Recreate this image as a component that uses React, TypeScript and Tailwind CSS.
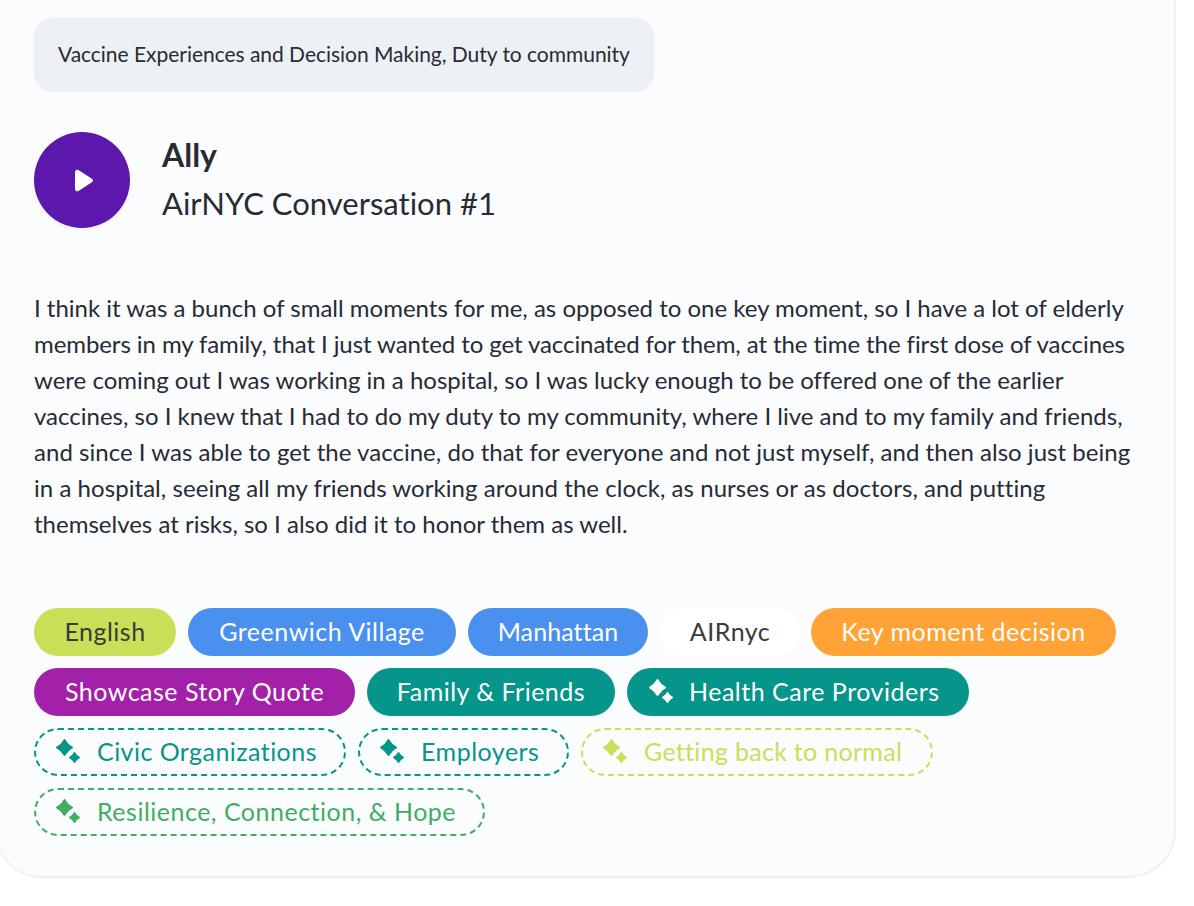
const Sparkle = () => (
  <svg viewBox="0 0 24 24" className="w-[24px] h-[24px] shrink-0" fill="currentColor" stroke="currentColor" strokeWidth="1.6" strokeLinejoin="round">
    <path d="M8.500 .8 Q11.200 5.800 16.200 8.500 Q11.200 11.200 8.500 16.200 Q5.800 11.200 .8 8.500 Q5.800 5.800 8.500 .8 Z" />
    <path d="M18.500 13.800 Q20.100 16.900 23.200 18.500 Q20.100 20.100 18.500 23.200 Q16.900 20.100 13.800 18.500 Q16.900 16.900 18.500 13.800 Z" />
  </svg>
);

const solid = "h-12 rounded-full flex items-center justify-center pb-[2px] text-[25px] leading-none whitespace-nowrap";
const dashed = "h-12 rounded-full flex items-center gap-[17px] pl-[20px] pb-[2px] text-[25px] leading-none whitespace-nowrap border-2 border-dashed";

export default function App() {
  return (
    <div className="w-[1194px] h-[906px] bg-white overflow-hidden [font-variant-ligatures:none]" style={{ fontFamily: '"Lato", "Open Sans", sans-serif' }}>
      <div className="-ml-[6px] w-[1182px] h-[878px] bg-[#fbfcfe] border-x-2 border-b-2 border-[#eef2f6] rounded-b-[48px] pl-[38px] pr-[40px] pt-[18px] text-[#272b33]">
        <div className="w-[620px] h-[74px] rounded-[18px] bg-[#edf1f5] flex items-center pl-[24px] pb-[3px] text-[21px] tracking-[-0.03px] whitespace-nowrap">
          Vaccine Experiences and Decision Making, Duty to community
        </div>
        <div className="flex items-center gap-8 mt-[40px]">
          <div className="w-24 h-24 rounded-full bg-[#5c17ac] flex items-center justify-center shadow-[0_2px_4px_rgba(0,0,0,0.05)]">
            <svg viewBox="0 0 20 23" className="w-5 h-[23px] ml-[4px]" fill="white">
              <path d="M1 3c0-1.800 1.900-2.900 3.400-2l13.500 8.700c1.400.8 1.400 2.800 0 3.600L4.400 22c-1.500.9-3.400-.2-3.400-2z" />
            </svg>
          </div>
          <div className="-mt-[3px]">
            <div className="text-[32px] font-bold leading-[48px]">Ally</div>
            <div className="text-[31px] leading-[48px]">AirNYC Conversation #1</div>
          </div>
        </div>
        <p className="mt-[62px] text-[24px] leading-[36px] w-[1110px] whitespace-nowrap">
          I think it was a bunch of small moments for me, as opposed to one key moment, so I have a lot of elderly<br />
          <span className="tracking-[-0.08px]">members in my family, that I just wanted to get vaccinated for them, at the time the first dose of vaccines</span><br />
          were coming out I was working in a hospital, so I was lucky enough to be offered one of the earlier<br />
          vaccines, so I knew that I had to do my duty to my community, where I live and to my family and friends,<br />
          <span className="tracking-[0.03px]">and since I was able to get the vaccine, do that for everyone and not just myself, and then also just being</span><br />
          <span className="tracking-[0.05px]">in a hospital, seeing all my friends working around the clock, as nurses or as doctors, and putting</span><br />
          themselves at risks, so I also did it to honor them as well.
        </p>
        <div className="mt-[66px] flex flex-col gap-3">
          <div className="flex gap-3">
            <div className={`${solid} w-[142px] tracking-[0.5px] bg-[#c7e058] text-[#3a3a3a]`}>English</div>
            <div className={`${solid} w-[268px] tracking-[0.5px] bg-[#4a90ee] text-white`}>Greenwich Village</div>
            <div className={`${solid} w-[180px] tracking-[0.1px] bg-[#4a90ee] text-white`}>Manhattan</div>
            <div className={`${solid} w-[140px] tracking-[0.5px] bg-white text-[#3a3a3a]`}>AIRnyc</div>
            <div className={`${solid} w-[305px] tracking-[0.5px] -ml-px bg-[#ffa336] text-white`}>Key moment decision</div>
          </div>
          <div className="flex gap-3">
            <div className={`${solid} w-[321px] tracking-[0.5px] bg-[#a221a8] text-white`}>Showcase Story Quote</div>
            <div className={`${solid} w-[248px] tracking-[0.5px] bg-[#05958a] text-white`}>Family &amp; Friends</div>
            <div className={`${solid} w-[342px] tracking-[0.5px] justify-start pl-[22px] gap-[16px] bg-[#05958a] text-white`}>
              <Sparkle />Health Care Providers
            </div>
          </div>
          <div className="flex gap-3">
            <div className={`${dashed} w-[312px] tracking-[0.45px] border-[#05958a] text-[#05958a]`}>
              <Sparkle />Civic Organizations
            </div>
            <div className={`${dashed} w-[211px] tracking-[0.5px] border-[#05958a] text-[#05958a]`}>
              <Sparkle />Employers
            </div>
            <div className={`${dashed} w-[352px] tracking-[0.3px] border-[#c7e058] text-[#c7e058]`}>
              <Sparkle />Getting back to normal
            </div>
          </div>
          <div className="flex gap-3">
            <div className={`${dashed} w-[451px] tracking-[0.5px] border-[#3fae62] text-[#3fae62]`}>
              <Sparkle />Resilience, Connection, &amp; Hope
            </div>
          </div>
        </div>
      </div>
    </div>
  );
}
